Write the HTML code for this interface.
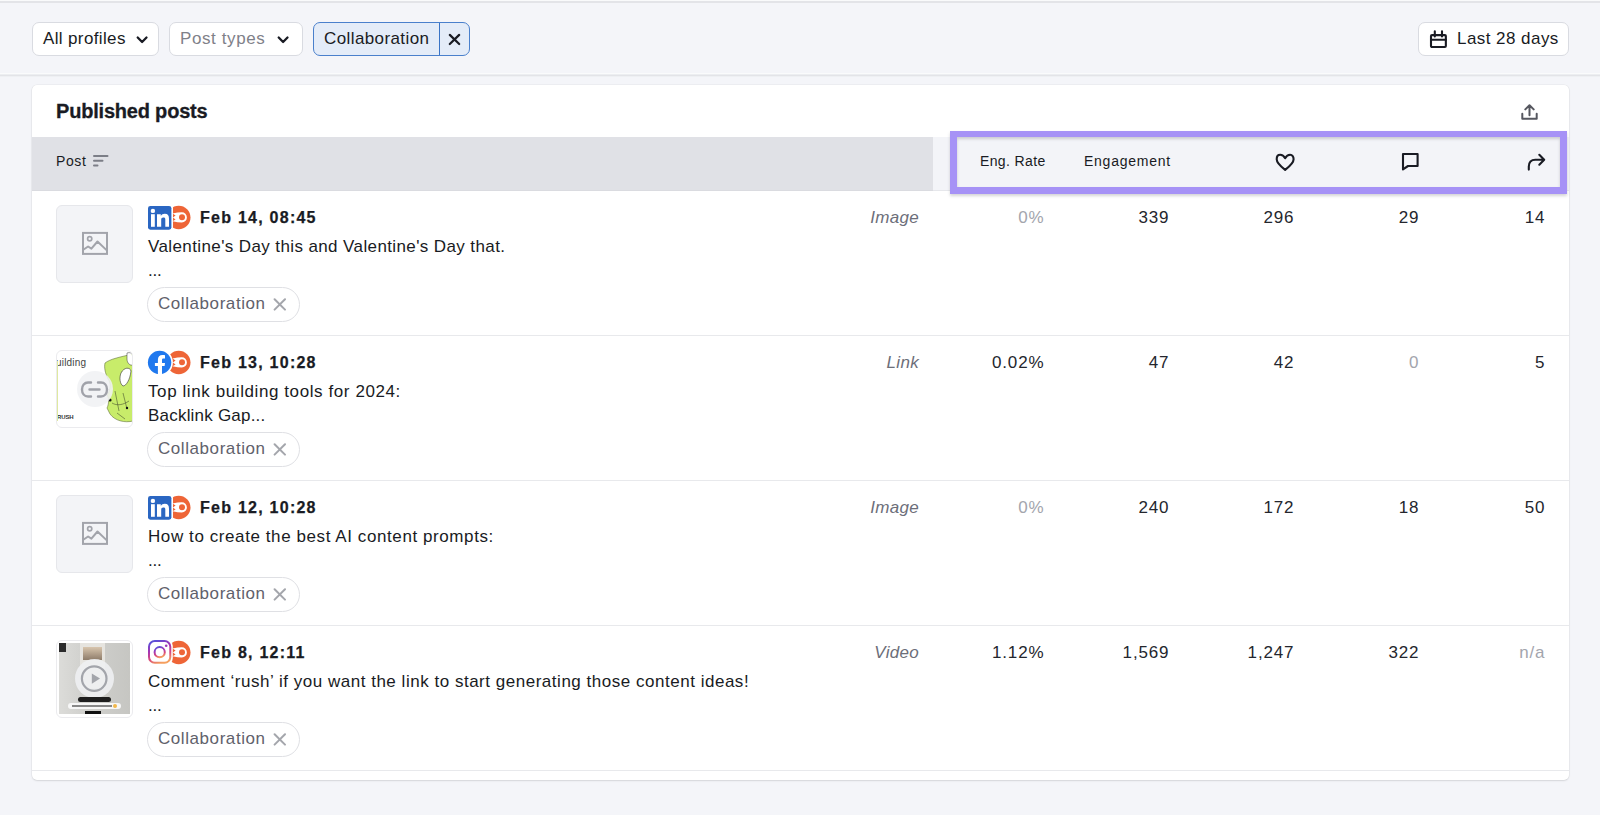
<!DOCTYPE html>
<html><head><meta charset="utf-8">
<style>
*{box-sizing:border-box;margin:0;padding:0}
html,body{width:1600px;height:815px;overflow:hidden;background:#f4f5f9;font-family:"Liberation Sans",sans-serif;color:#191b23}
.abs{position:absolute}
.topline{left:0;top:0;width:1600px;height:1px;background:#f9fafb}.topline2{left:0;top:1px;width:1600px;height:2px;background:#e3e4e8}
.sep{left:0;top:73px;width:1600px;height:1px;background:#fafbfc}.sep2{left:0;top:74px;width:1600px;height:3px;background:linear-gradient(180deg,#eceef1 0%,#eceef1 33%,#e3e4e8 33%,#e3e4e8 66%,#eef0f3 66%)}
.btn{position:absolute;top:22px;height:34px;background:#fff;border:1px solid #d9dbe1;border-radius:7px;font-size:17px;letter-spacing:0.4px;line-height:31px;white-space:nowrap}
.btn .t{position:absolute;top:0}
.card{left:32px;top:85px;width:1537px;height:695px;background:#fff;border-radius:5px;box-shadow:0 0 0 0.5px rgba(0,0,0,0.06),0 1px 2px rgba(0,0,0,0.10)}
.title{left:56px;top:100px;font-size:20px;font-weight:bold;letter-spacing:-0.2px;white-space:nowrap;-webkit-text-stroke:0.3px #191b23}
.thead{left:32px;top:137px;width:901px;height:54px;background:#e0e1e6;border-bottom:1px solid #dadbe0}
.thead2{left:933px;top:137px;width:636px;height:54px;background:#f3f4f8;border-bottom:1px solid #e6e7eb}
.hl{left:950px;top:131px;width:617px;height:63px;border:7px solid #a692f6;border-top-width:6.5px;filter:drop-shadow(0 2px 1.5px rgba(60,60,70,0.22))}
.hlab{position:absolute;top:153px;font-size:14px;letter-spacing:0.2px;white-space:nowrap;color:#191b23}
.rowsep{position:absolute;left:32px;width:1537px;height:1px;background:#e8e9ec}
.thumb{position:absolute;left:56px;width:77px;height:78px;border-radius:6px;background:#f3f4f7;border:1px solid #e6e7eb}
.date{position:absolute;left:200px;font-size:16px;font-weight:bold;letter-spacing:1.25px;white-space:nowrap;-webkit-text-stroke:0.25px #191b23}
.txt{position:absolute;left:148px;font-size:17px;letter-spacing:0.5px;white-space:nowrap;line-height:24px}
.tag{position:absolute;left:147px;width:153px;height:35px;border:1px solid #dfe0e4;border-radius:17.5px;font-size:17px;letter-spacing:0.57px;color:#5f616b;line-height:32px;white-space:nowrap}
.tag span{position:absolute;left:10px;top:0}
.type{position:absolute;right:681px;font-size:17px;font-style:italic;color:#6c6e79;letter-spacing:0.3px;white-space:nowrap}
.num{position:absolute;font-size:17px;letter-spacing:0.85px;color:#24262d;white-space:nowrap;text-align:right}
.gray{color:#a3a5ad}
</style></head><body>
<div class="abs topline"></div><div class="abs topline2"></div>
<div class="abs sep"></div><div class="abs sep2"></div>

<div class="btn" style="left:32px;width:127px"><span class="t" style="left:10px;letter-spacing:0.36px">All profiles</span>
<svg class="abs" style="left:103px;top:10px" width="14" height="12" viewBox="0 0 14 12"><path d="M1.7 4.5 L6.1 9 L10.5 4.5" fill="none" stroke="#191b23" stroke-width="2.3" stroke-linecap="round" stroke-linejoin="round"/></svg></div>
<div class="btn" style="left:169px;width:134px;color:#7f8189"><span class="t" style="left:10px;letter-spacing:0.6px">Post types</span>
<svg class="abs" style="left:107px;top:10px" width="14" height="12" viewBox="0 0 14 12"><path d="M1.7 4.5 L6.1 9 L10.5 4.5" fill="none" stroke="#191b23" stroke-width="2.3" stroke-linecap="round" stroke-linejoin="round"/></svg></div>
<div class="btn" style="left:313px;width:157px;background:#e4ecf8;border-color:#4a80cc"><span class="t" style="left:10px;letter-spacing:0.4px">Collaboration</span>
<div class="abs" style="left:125px;top:0;width:1px;height:32px;background:#3a74c6"></div>
<svg class="abs" style="left:134px;top:10px" width="14" height="13" viewBox="0 0 14 13"><path d="M1.8 1.9 L11.2 11 M11.2 1.9 L1.8 11" fill="none" stroke="#191b23" stroke-width="2.2" stroke-linecap="round"/></svg></div>

<div class="btn" style="left:1418px;width:151px"><span class="t" style="left:38px;letter-spacing:0.45px">Last 28 days</span>
<svg class="abs" style="left:9px;top:5px" width="22" height="22" viewBox="0 0 22 22"><rect x="3" y="7.1" width="14.85" height="11.9" rx="1" fill="none" stroke="#191b23" stroke-width="2.1"/><path d="M3 11.7 H17.85 M6.8 3.3 V8.4 M14 3.3 V8.4" stroke="#191b23" stroke-width="2.1" stroke-linecap="round"/></svg></div>

<div class="abs card"></div>
<div class="abs title">Published posts</div>
<svg class="abs" style="left:1520px;top:102px" width="19" height="19" viewBox="0 0 19 19"><path d="M9.5 13.2 V3.2 M5.3 7.4 L9.5 3.2 L13.7 7.4 M2.3 11.8 V16.8 H16.7 V11.8" fill="none" stroke="#55575f" stroke-width="2" stroke-linecap="round" stroke-linejoin="round"/></svg>

<div class="abs thead"></div>
<div class="abs thead2"></div>
<div class="hlab" style="left:56px;top:153px;letter-spacing:0.6px">Post</div>
<svg class="abs" style="left:92px;top:154px" width="17" height="14" viewBox="0 0 17 14"><path d="M2 2 H15.5 M2 6.8 H10.5 M2 11.6 H5.5" stroke="#7c7e87" stroke-width="2" stroke-linecap="round"/></svg>
<div class="abs hl"></div>
<div class="hlab" style="left:980px;letter-spacing:0.37px">Eng. Rate</div>
<div class="hlab" style="left:1084px;letter-spacing:0.75px">Engagement</div>
<svg class="abs" style="left:1275px;top:152px" width="21" height="19" viewBox="0 0 21 19"><path d="M10.15 6.2 C8.8 3.8 6.8 2.8 5.2 2.8 C2.9 2.8 1.7 4.8 1.7 7.2 C1.7 11 6 14.6 10.15 17.8 C14.3 14.6 18.6 11 18.6 7.2 C18.6 4.8 17.4 2.8 15.1 2.8 C13.5 2.8 11.5 3.8 10.15 6.2 Z" fill="none" stroke="#191b23" stroke-width="2.1" stroke-linejoin="round"/></svg>
<svg class="abs" style="left:1401px;top:152px" width="19" height="19" viewBox="0 0 19 19"><path d="M2 2 H16.6 V14 H7 L2 17.3 Z" fill="none" stroke="#191b23" stroke-width="2.1" stroke-linejoin="round"/></svg>
<svg class="abs" style="left:1526px;top:152px" width="20" height="19" viewBox="0 0 20 19"><path d="M2.8 17.6 V14.5 C2.8 10.2 5.2 7.8 9.3 7.8 H17.8 M13.3 2.8 L18.2 7.8 L13.3 12.7" fill="none" stroke="#191b23" stroke-width="2.1" stroke-linecap="round" stroke-linejoin="round"/></svg>

<div class="thumb" style="top:205px"><svg class="abs" style="left:24px;top:25px" width="30" height="26" viewBox="0 0 30 26"><rect x="2" y="1.9" width="24" height="21" fill="none" stroke="#a2a4ab" stroke-width="2"/><circle cx="8.7" cy="7.7" r="2.1" fill="none" stroke="#a2a4ab" stroke-width="1.7"/><path d="M2.3 18.8 L7.1 15.5 L10.4 17.7 L16.5 10.5 L25.8 19.4" fill="none" stroke="#a2a4ab" stroke-width="2" stroke-linejoin="round"/></svg></div>
<svg class="abs" style="left:147px;top:205px" width="48" height="26" viewBox="0 0 48 26"><circle cx="31.7" cy="12.5" r="11.8" fill="#ee6537"/>
<path d="M25.5 8.6 L30.5 7.5 L34.8 7.3 A5.1 5.1 0 0 1 34.8 17.5 L30.5 17.3 L25.5 16.2 L28.6 14.4 L25.9 12.4 L28.6 10.4 Z" fill="#fff"/>
<circle cx="35" cy="12.3" r="3" fill="#ee6537"/>
<rect x="0" y="0" width="26" height="25.6" rx="3" fill="#fff"/>
<rect x="1" y="0.9" width="23.4" height="23.8" rx="2.4" fill="#2a66c2"/>
<rect x="4" y="9.2" width="3.8" height="12.6" fill="#fff"/>
<circle cx="5.9" cy="5.9" r="2.2" fill="#fff"/>
<path d="M10 9.2 H13.8 V11 C14.6 9.7 16 8.8 17.8 8.8 C20.8 8.8 22 10.6 22 13.8 V21.8 H18.3 V14.5 C18.3 13.2 17.8 12.6 16.4 12.6 C14.9 12.6 14.2 13.5 14.2 14.8 V21.8 H10 Z" fill="#fff"/>
</svg>
<div class="date" style="top:209px">Feb 14, 08:45</div>
<div class="txt" style="top:235px;letter-spacing:0.39px">Valentine's Day this and Valentine's Day that.</div>
<div class="txt" style="top:259px;letter-spacing:-0.2px">...</div>
<div class="tag" style="top:287px"><span>Collaboration</span><svg class="abs" style="left:125px;top:10px" width="14" height="14" viewBox="0 0 14 14"><path d="M1.6 1.2 L12 11.6 M12 1.2 L1.6 11.6" fill="none" stroke="#a4a6ac" stroke-width="2" stroke-linecap="round"/></svg></div>
<div class="type" style="top:208px">Image</div>
<div class="num gray" style="top:208px;right:555.6px">0%</div>
<div class="num " style="top:208px;right:430.6px">339</div>
<div class="num " style="top:208px;right:305.6px">296</div>
<div class="num " style="top:208px;right:180.6px">29</div>
<div class="num " style="top:208px;right:54.6px">14</div>
<div class="thumb" style="top:350px;background:#fff;overflow:hidden;border-color:#ebebee">
<div class="abs" style="left:-1px;top:6px;font-size:10px;color:#444;letter-spacing:0.2px">uilding</div>
<div class="abs" style="left:0px;top:63px;font-size:6px;font-weight:bold;color:#333;letter-spacing:-0.1px">RUSH</div>
<div class="abs" style="left:0;top:10px;width:1px;height:60px;background:#dfe9a0"></div>
<svg class="abs" style="left:0;top:0" width="77" height="78" viewBox="0 0 77 78">
<path d="M48 12 C53 8 63 6 76 3 L76 70 C68 72 58 70 53 63 L50 57 C52 53 52 47 50 44 C54 38 54 32 51 28 C48 22 47 16 48 12 Z" fill="#c8ec6a" stroke="#4d5a2a" stroke-width="0.5"/>
<path d="M64 22 C67 16 73 16 74 20 C73 29 69 35 66 35 C63 33 62 27 64 22 Z" fill="#fff" stroke="#333" stroke-width="0.6"/>
<path d="M70 2 C73 1 76 2 76 6 L76 14 C73 15 70 12 70 8 Z" fill="#fff" stroke="#333" stroke-width="0.5"/>
<path d="M58 40 L62 60 M66 42 L70 58 M55 52 C60 55 66 54 72 50 M60 62 L68 68" stroke="#4a5530" stroke-width="0.6" fill="none"/>
<circle cx="53" cy="49" r="1.6" fill="#111"/>
<circle cx="70" cy="57" r="1.2" fill="#111"/>
</svg>
<div class="abs" style="left:20px;top:20px;width:36px;height:36px;border-radius:18px;background:rgba(240,241,244,0.88)"></div>
<svg class="abs" style="left:22px;top:29px" width="32" height="19" viewBox="0 0 32 19"><path d="M12 2.5 H9 C5.4 2.5 3 5.5 3 9.5 C3 13.5 5.4 16.5 9 16.5 H12 M19 2.5 H22 C25.6 2.5 28 5.5 28 9.5 C28 13.5 25.6 16.5 22 16.5 H19 M10.5 9.5 H20.5" fill="none" stroke="#a0a2a9" stroke-width="2.4" stroke-linecap="round"/></svg>
</div>
<svg class="abs" style="left:147px;top:350px" width="48" height="26" viewBox="0 0 48 26"><circle cx="31.7" cy="12.5" r="11.8" fill="#ee6537"/>
<path d="M25.5 8.6 L30.5 7.5 L34.8 7.3 A5.1 5.1 0 0 1 34.8 17.5 L30.5 17.3 L25.5 16.2 L28.6 14.4 L25.9 12.4 L28.6 10.4 Z" fill="#fff"/>
<circle cx="35" cy="12.3" r="3" fill="#ee6537"/>
<circle cx="12.6" cy="12.4" r="13.3" fill="#fff"/>
<circle cx="12.6" cy="12.4" r="11.7" fill="#1f78ee"/>
<path d="M10.9 24.2 V16 H7.9 V13 H10.9 V9.8 C10.9 6.7 12.6 5.1 15.4 5.1 C16.5 5.1 17.4 5.2 18 5.3 V8.6 H16.4 C15.3 8.6 15 9.2 15 10.1 V13 H18 L17.6 16 H15 V24.2 Z" fill="#fff"/>
</svg>
<div class="date" style="top:354px">Feb 13, 10:28</div>
<div class="txt" style="top:380px;letter-spacing:0.59px">Top link building tools for 2024:</div>
<div class="txt" style="top:404px;letter-spacing:0.21px">Backlink Gap...</div>
<div class="tag" style="top:432px"><span>Collaboration</span><svg class="abs" style="left:125px;top:10px" width="14" height="14" viewBox="0 0 14 14"><path d="M1.6 1.2 L12 11.6 M12 1.2 L1.6 11.6" fill="none" stroke="#a4a6ac" stroke-width="2" stroke-linecap="round"/></svg></div>
<div class="type" style="top:353px">Link</div>
<div class="num " style="top:353px;right:555.6px">0.02%</div>
<div class="num " style="top:353px;right:430.6px">47</div>
<div class="num " style="top:353px;right:305.6px">42</div>
<div class="num gray" style="top:353px;right:180.6px">0</div>
<div class="num " style="top:353px;right:54.6px">5</div>
<div class="thumb" style="top:495px"><svg class="abs" style="left:24px;top:25px" width="30" height="26" viewBox="0 0 30 26"><rect x="2" y="1.9" width="24" height="21" fill="none" stroke="#a2a4ab" stroke-width="2"/><circle cx="8.7" cy="7.7" r="2.1" fill="none" stroke="#a2a4ab" stroke-width="1.7"/><path d="M2.3 18.8 L7.1 15.5 L10.4 17.7 L16.5 10.5 L25.8 19.4" fill="none" stroke="#a2a4ab" stroke-width="2" stroke-linejoin="round"/></svg></div>
<svg class="abs" style="left:147px;top:495px" width="48" height="26" viewBox="0 0 48 26"><circle cx="31.7" cy="12.5" r="11.8" fill="#ee6537"/>
<path d="M25.5 8.6 L30.5 7.5 L34.8 7.3 A5.1 5.1 0 0 1 34.8 17.5 L30.5 17.3 L25.5 16.2 L28.6 14.4 L25.9 12.4 L28.6 10.4 Z" fill="#fff"/>
<circle cx="35" cy="12.3" r="3" fill="#ee6537"/>
<rect x="0" y="0" width="26" height="25.6" rx="3" fill="#fff"/>
<rect x="1" y="0.9" width="23.4" height="23.8" rx="2.4" fill="#2a66c2"/>
<rect x="4" y="9.2" width="3.8" height="12.6" fill="#fff"/>
<circle cx="5.9" cy="5.9" r="2.2" fill="#fff"/>
<path d="M10 9.2 H13.8 V11 C14.6 9.7 16 8.8 17.8 8.8 C20.8 8.8 22 10.6 22 13.8 V21.8 H18.3 V14.5 C18.3 13.2 17.8 12.6 16.4 12.6 C14.9 12.6 14.2 13.5 14.2 14.8 V21.8 H10 Z" fill="#fff"/>
</svg>
<div class="date" style="top:499px">Feb 12, 10:28</div>
<div class="txt" style="top:525px;letter-spacing:0.585px">How to create the best AI content prompts:</div>
<div class="txt" style="top:549px;letter-spacing:-0.2px">...</div>
<div class="tag" style="top:577px"><span>Collaboration</span><svg class="abs" style="left:125px;top:10px" width="14" height="14" viewBox="0 0 14 14"><path d="M1.6 1.2 L12 11.6 M12 1.2 L1.6 11.6" fill="none" stroke="#a4a6ac" stroke-width="2" stroke-linecap="round"/></svg></div>
<div class="type" style="top:498px">Image</div>
<div class="num gray" style="top:498px;right:555.6px">0%</div>
<div class="num " style="top:498px;right:430.6px">240</div>
<div class="num " style="top:498px;right:305.6px">172</div>
<div class="num " style="top:498px;right:180.6px">18</div>
<div class="num " style="top:498px;right:54.6px">50</div>
<div class="thumb" style="top:640px;background:#fff;overflow:hidden;border-color:#ebebee">
<div class="abs" style="left:2px;top:2px;width:71px;height:71px;background:linear-gradient(90deg,#dcdcd9 0%,#d2d2cf 30%,#c6c6c2 100%)"></div>
<div class="abs" style="left:23px;top:2px;width:25px;height:45px;background:#e6e4df"></div>
<div class="abs" style="left:26px;top:6px;width:19px;height:13px;background:linear-gradient(180deg,#d8c5ad,#8e7c6a)"></div>
<div class="abs" style="left:2px;top:2px;width:7px;height:9px;background:#2b2b2b"></div>
<div class="abs" style="left:18px;top:18px;width:39px;height:39px;border-radius:20px;background:rgba(238,239,242,0.9)"></div>
<svg class="abs" style="left:22px;top:22px" width="32" height="32" viewBox="0 0 32 32"><circle cx="15.2" cy="15.6" r="12.3" fill="none" stroke="#a3a5ab" stroke-width="2.2"/><path d="M12.8 10.5 L21 15.6 L12.8 20.8 Z" fill="#a3a5ab"/></svg>
<div class="abs" style="left:21px;top:56px;width:33px;height:5px;border-radius:3px;background:#1e1e1e"></div>
<div class="abs" style="left:11px;top:62px;width:53px;height:6px;border-radius:3px;background:#f7f7f7"></div>
<div class="abs" style="left:15px;top:64px;width:40px;height:1.5px;background:#888"></div>
<div class="abs" style="left:56px;top:63px;width:4px;height:4px;border-radius:2px;background:#f2b84b"></div>
<div class="abs" style="left:28px;top:70px;width:16px;height:3px;background:#111"></div>
</div>
<svg class="abs" style="left:147px;top:640px" width="48" height="26" viewBox="0 0 48 26"><circle cx="31.7" cy="12.5" r="11.8" fill="#ee6537"/>
<path d="M25.5 8.6 L30.5 7.5 L34.8 7.3 A5.1 5.1 0 0 1 34.8 17.5 L30.5 17.3 L25.5 16.2 L28.6 14.4 L25.9 12.4 L28.6 10.4 Z" fill="#fff"/>
<circle cx="35" cy="12.3" r="3" fill="#ee6537"/>
<defs><linearGradient id="ig" x1="0.25" y1="0" x2="0.6" y2="1"><stop offset="0" stop-color="#5a4fd8"/><stop offset="0.35" stop-color="#a235b6"/><stop offset="0.7" stop-color="#d9487c"/><stop offset="1" stop-color="#f5a05e"/></linearGradient></defs>
<rect x="-0.5" y="-1" width="26.3" height="26" rx="7" fill="#fff"/>
<rect x="2" y="1" width="21.3" height="21.8" rx="5.8" fill="none" stroke="url(#ig)" stroke-width="2"/>
<circle cx="12.7" cy="12.2" r="5.1" fill="none" stroke="url(#ig)" stroke-width="2"/>
<circle cx="19.2" cy="5.7" r="1.3" fill="#9b38b8"/>
</svg>
<div class="date" style="top:644px">Feb 8, 12:11</div>
<div class="txt" style="top:670px;letter-spacing:0.52px">Comment ‘rush’ if you want the link to start generating those content ideas!</div>
<div class="txt" style="top:694px;letter-spacing:-0.2px">...</div>
<div class="tag" style="top:722px"><span>Collaboration</span><svg class="abs" style="left:125px;top:10px" width="14" height="14" viewBox="0 0 14 14"><path d="M1.6 1.2 L12 11.6 M12 1.2 L1.6 11.6" fill="none" stroke="#a4a6ac" stroke-width="2" stroke-linecap="round"/></svg></div>
<div class="type" style="top:643px">Video</div>
<div class="num " style="top:643px;right:555.6px">1.12%</div>
<div class="num " style="top:643px;right:430.6px">1,569</div>
<div class="num " style="top:643px;right:305.6px">1,247</div>
<div class="num " style="top:643px;right:180.6px">322</div>
<div class="num gray" style="top:643px;right:54.6px">n/a</div>
<div class="rowsep" style="top:335px"></div>
<div class="rowsep" style="top:480px"></div>
<div class="rowsep" style="top:625px"></div>
<div class="rowsep" style="top:770px"></div>

</body></html>
